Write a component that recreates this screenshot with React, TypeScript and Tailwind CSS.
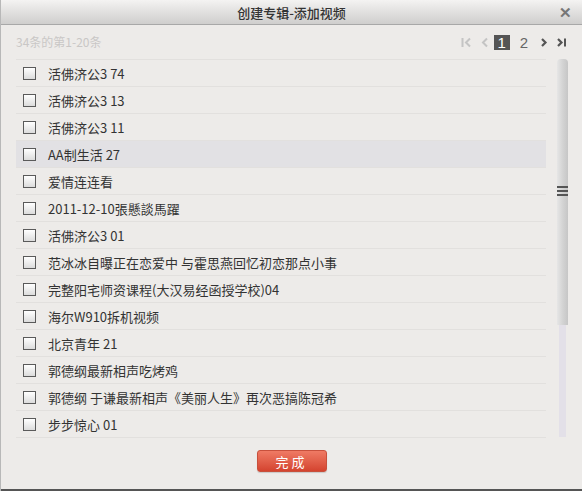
import React from "react";

const items = [
  "活佛济公3 74",
  "活佛济公3 13",
  "活佛济公3 11",
  "AA制生活 27",
  "爱情连连看",
  "2011-12-10張懸談馬躍",
  "活佛济公3 01",
  "范冰冰自曝正在恋爱中 与霍思燕回忆初恋那点小事",
  "完整阳宅师资课程(大汉易经函授学校)04",
  "海尔W910拆机视频",
  "北京青年 21",
  "郭德纲最新相声吃烤鸡",
  "郭德纲 于谦最新相声《美丽人生》再次恶搞陈冠希",
  "步步惊心 01",
];

const font = { fontFamily: '"Noto Sans CJK SC", "Liberation Sans", sans-serif' };

function First({ c }: { c: string }) {
  return (
    <svg width="10" height="11" viewBox="0 0 10 11">
      <rect x="0.5" y="1" width="2" height="9" fill={c} />
      <path d="M9 1.5 L5 5.5 L9 9.5" stroke={c} strokeWidth="2" fill="none" />
    </svg>
  );
}
function Prev({ c }: { c: string }) {
  return (
    <svg width="7" height="11" viewBox="0 0 7 11">
      <path d="M6 1.5 L2 5.5 L6 9.5" stroke={c} strokeWidth="2" fill="none" />
    </svg>
  );
}
function Next({ c }: { c: string }) {
  return (
    <svg width="7" height="11" viewBox="0 0 7 11">
      <path d="M1 2 L4.5 5.5 L1 9" stroke={c} strokeWidth="2.2" fill="none" />
    </svg>
  );
}
function Last({ c }: { c: string }) {
  return (
    <svg width="10" height="11" viewBox="0 0 10 11">
      <path d="M1 2 L4.5 5.5 L1 9" stroke={c} strokeWidth="2.2" fill="none" />
      <rect x="7" y="1.5" width="2" height="8" fill={c} />
    </svg>
  );
}

export default function App() {
  return (
    <div
      className="w-[582px] h-[491px] flex flex-col bg-[#edebe9] border-l border-[#b8b8b8] overflow-hidden"
      style={font}
    >
      {/* title bar */}
      <div className="h-[25px] shrink-0 flex items-center justify-center relative bg-gradient-to-b from-[#f4f3f2] to-[#cfcecd] border-b border-[#a8a8a8]">
        <span className="text-[13px] text-[#333] leading-none font-medium">创建专辑-添加视频</span>
        <span className="absolute right-[10px] top-[4px] text-[#777] text-[15px] font-bold leading-none">✕</span>
      </div>

      {/* pager row */}
      <div className="h-[34px] shrink-0 flex items-center pl-[15px] pr-[15px]">
        <span className="text-[12px] text-[#c9c7c6] leading-none">34条的第1-20条</span>
        <div className="ml-auto flex items-center">
          <span className="mr-[10px] flex"><First c="#c4c4c4" /></span>
          <span className="mr-[6px] flex"><Prev c="#c4c4c4" /></span>
          <span className="w-[16px] h-[15px] bg-[#555] text-white text-[15px] leading-none flex items-center justify-center" style={{ fontFamily: '"Liberation Sans", sans-serif' }}>1</span>
          <span className="ml-[10px] text-[#666] text-[15px] leading-none" style={{ fontFamily: '"Liberation Sans", sans-serif' }}>2</span>
          <span className="ml-[13px] flex"><Next c="#555" /></span>
          <span className="ml-[9px] flex"><Last c="#555" /></span>
        </div>
      </div>

      {/* list + scrollbar */}
      <div className="flex shrink-0 h-[378px]">
        <div className="ml-[15px] w-[530px] flex flex-col border-t border-[#e2e0de]">
          {items.map((t, i) => (
            <div
              key={i}
              className={`h-[27px] shrink-0 flex items-center border-b border-[#e2e0de] ${i === 3 ? "bg-[#e2e1e4]" : ""}`}
            >
              <span className="ml-[7px] w-[13px] h-[13px] border border-[#5a5a5a] bg-gradient-to-b from-[#ffffff] to-[#dcdcdc]" />
              <span className="ml-[12px] text-[13px] text-[#333] leading-none whitespace-nowrap">{t}</span>
            </div>
          ))}
        </div>
        <div className="ml-[11px] w-[11px] flex flex-col">
          <div className="relative h-[266px] rounded-t-[4px] bg-gradient-to-r from-[#e6e6e6] via-[#d4d4d4] to-[#c6c6c6]">
            <div className="absolute left-0 right-0 top-[127px] flex flex-col gap-[2px]">
              <div className="h-[2px] bg-[#555]" />
              <div className="h-[2px] bg-[#555]" />
              <div className="h-[2px] bg-[#555]" />
            </div>
          </div>
          <div className="mx-auto w-[7px] flex-1 bg-[#e3e0e8]" />
        </div>
      </div>

      {/* button */}
      <div className="flex-1 flex items-start justify-center pt-[13px]">
        <button className="w-[70px] h-[22px] rounded-[3px] bg-gradient-to-b from-[#ef7a64] to-[#d4432f] border border-[#c8503c] text-white text-[13px] leading-none tracking-[3px] shadow-[0_1px_1px_rgba(0,0,0,0.15)]">
          完成
        </button>
      </div>
      <div className="h-[2px] shrink-0 bg-[#555]" />
    </div>
  );
}
